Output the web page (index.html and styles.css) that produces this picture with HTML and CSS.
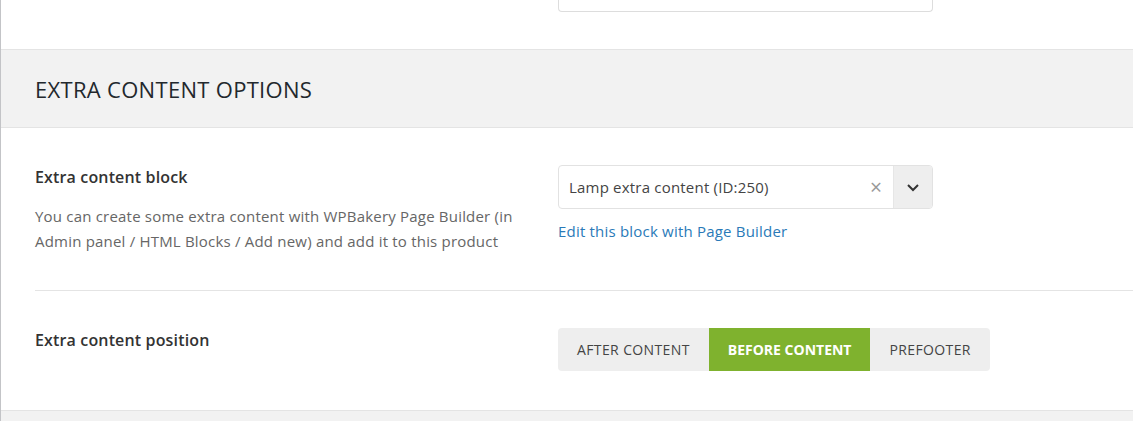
FILE: index.html
```html
<!DOCTYPE html>
<html>
<head>
<meta charset="utf-8">
<link rel="stylesheet" href="styles.css">
</head>
<body>
<div class="panel">
  <div class="top-row">
    <div class="top-field"></div>
  </div>
  <div class="section-head">
    <h2 class="section-title">Extra content options</h2>
  </div>
  <div class="row row-sep">
    <div class="label-col">
      <div class="label">Extra content block</div>
      <div class="desc">You can create some extra content with WPBakery Page Builder (in Admin panel / HTML Blocks / Add new) and add it to this product</div>
    </div>
    <div class="field-col">
      <div class="select">
        <span class="select-text">Lamp extra content (ID:250)</span>
        <span class="select-clear">×</span>
        <span class="select-arrow">
          <svg width="14" height="10" viewBox="0 0 14 10"><path d="M2 3 L7 8 L12 3" fill="none" stroke="#333" stroke-width="2"/></svg>
        </span>
      </div>
      <a class="edit-link" href="#">Edit this block with Page Builder</a>
    </div>
  </div>
  <div class="row">
    <div class="label-col">
      <div class="label">Extra content position</div>
    </div>
    <div class="field-col">
      <div class="btn-group">
        <span class="btn">After content</span>
        <span class="btn btn-active">Before content</span>
        <span class="btn">Prefooter</span>
      </div>
    </div>
  </div>
  <div class="section-foot"></div>
</div>
</body>
</html>
```

FILE: styles.css
```css
* { box-sizing: border-box; }
html, body { margin: 0; padding: 0; background: #fff; }
body {
  font-family: "Open Sans", "Noto Sans", sans-serif;
  color: #333;
  overflow: hidden;
}
.panel {
  border-left: 1px solid #c3c4c7;
  height: 421px;
  display: flex;
  flex-direction: column;
}
.top-row {
  height: 49px;
  padding-left: 557px;
}
.top-field {
  width: 375px;
  height: 12px;
  border: 1px solid #ddd;
  border-top: none;
  border-radius: 0 0 4px 4px;
}
.section-head {
  height: 79px;
  background: #f2f2f2;
  border-top: 1px solid #e4e4e4;
  border-bottom: 1px solid #e4e4e4;
  display: flex;
  align-items: center;
  padding-left: 34px;
}
.section-title {
  margin: 0;
  font-size: 22px;
  font-weight: 400;
  text-transform: uppercase;
  color: #23282d;
  letter-spacing: 0.3px;
}
.row {
  margin-left: 34px;
  display: grid;
  grid-template-columns: 523px 1fr;
  padding: 37px 0 39px;
}
.row-sep {
  border-bottom: 1px solid #e4e4e4;
  padding-bottom: 36px;
}
.label {
  font-size: 16px;
  line-height: 24px;
  font-weight: 600;
  color: #333;
  letter-spacing: 0.15px;
}
.desc {
  margin-top: 15px;
  font-size: 15px;
  line-height: 25px;
  color: #666;
  width: 490px;
  letter-spacing: 0.2px;
}
.select {
  width: 375px;
  height: 44px;
  border: 1px solid #e2e2e2;
  border-radius: 4px;
  display: flex;
  align-items: center;
  overflow: hidden;
}
.select-text {
  flex: 1;
  padding-left: 10px;
  font-size: 15px;
  color: #444;
  letter-spacing: 0.2px;
}
.select-clear {
  width: 34px;
  text-align: center;
  font-size: 21px;
  color: #999;
  line-height: 1;
}
.select-arrow {
  width: 39px;
  align-self: stretch;
  background: #eeeeee;
  border-left: 1px solid #e6e6e6;
  display: flex;
  align-items: center;
  justify-content: center;
}
.edit-link {
  display: block;
  margin-top: 12px;
  font-size: 15px;
  line-height: 20px;
  color: #2a7ab8;
  text-decoration: none;
  letter-spacing: 0.2px;
}
.btn-group {
  display: inline-flex;
  background: #eee;
  border-radius: 4px;
  height: 43px;
}
.btn {
  display: flex;
  align-items: center;
  padding: 0 19px;
  font-size: 14px;
  text-transform: uppercase;
  color: #444;
  letter-spacing: 0.38px;
}
.btn-active {
  background: #7fb22e;
  color: #fff;
  font-weight: 700;
  letter-spacing: 0;
}
.section-foot {
  flex: 1;
  background: #f2f2f2;
  border-top: 1px solid #e4e4e4;
}
```
